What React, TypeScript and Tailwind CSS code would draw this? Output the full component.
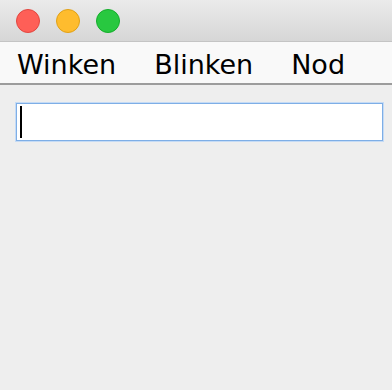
export default function App() {
  const menus = ["Winken", "Blinken", "Nod"];
  return (
    <div className="w-[392px] h-[390px] bg-[#eeeeee] flex flex-col overflow-hidden" style={{ fontFamily: '"DejaVu Sans", sans-serif' }}>
      {/* title bar */}
      <div className="h-[42px] shrink-0 flex items-center gap-4 pl-4 bg-gradient-to-b from-[#ebebeb] to-[#d6d6d6] border-b border-[#c4c4c4]">
        <span className="w-6 h-6 rounded-full bg-[#fe5f57] border border-[#e2463f]" />
        <span className="w-6 h-6 rounded-full bg-[#febc2e] border border-[#e1a116]" />
        <span className="w-6 h-6 rounded-full bg-[#28c840] border border-[#14ae2b]" />
      </div>
      {/* menu bar */}
      <div className="h-[43px] shrink-0 flex items-center pl-[17px] gap-[38px] bg-[#f9f9f9] border-b-2 border-[#9c9c9c]">
        {menus.map((m) => (
          <span key={m} className="text-[27px] leading-none text-black pt-[3px]">{m}</span>
        ))}
      </div>
      {/* content */}
      <div className="px-4 pt-[18px]">
        <div className="h-[38px] w-[367px] bg-white border border-[#7eaee6] shadow-[0_0_0_1px_#c5dbf5] flex items-center pl-[3px]">
          <span className="w-[2px] h-[32px] bg-black" />
        </div>
      </div>
    </div>
  );
}
